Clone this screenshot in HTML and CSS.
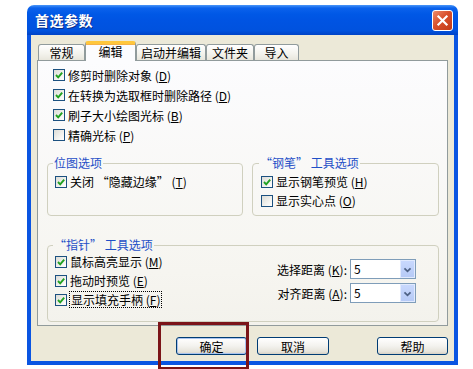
FILE: index.html
```html
<!DOCTYPE html>
<html lang="zh-CN">
<head>
    <meta charset="UTF-8">
    <meta name="viewport" content="width=device-width, initial-scale=1.0">
    <title>首选参数</title>
    <link rel="stylesheet" href="styles.css">
</head>
<body>

    <div class="window">
        <div class="titlebar">
            <span class="title">首选参数</span>
            <span class="close">
                <svg viewBox="0 0 21 21" width="19" height="19"><path d="M6 6 L15 15 M15 6 L6 15" stroke="#fff" stroke-width="2.4" stroke-linecap="square" fill="none"/></svg>
            </span>
        </div>

        <div class="frame">
            <div class="tabs">
                <div class="tab" style="width:47px">常规</div>
                <div class="tab active" style="width:51px">编辑</div>
                <div class="tab" style="width:70px">启动并编辑</div>
                <div class="tab" style="width:48px">文件夹</div>
                <div class="tab" style="width:45px">导入</div>
            </div>

            <div class="panel">
                <div class="checks top-checks">
                    <label class="check"><span class="box on"><svg viewBox="0 0 10 10" width="10" height="10"><path d="M2 5 L4.2 7.3 L8.2 2.6" fill="none" stroke="#21A121" stroke-width="1.9"/></svg></span>修剪时删除对象 (<u>D</u>)</label>
                    <label class="check"><span class="box on"><svg viewBox="0 0 10 10" width="10" height="10"><path d="M2 5 L4.2 7.3 L8.2 2.6" fill="none" stroke="#21A121" stroke-width="1.9"/></svg></span>在转换为选取框时删除路径 (<u>D</u>)</label>
                    <label class="check"><span class="box on"><svg viewBox="0 0 10 10" width="10" height="10"><path d="M2 5 L4.2 7.3 L8.2 2.6" fill="none" stroke="#21A121" stroke-width="1.9"/></svg></span>刷子大小绘图光标 (<u>B</u>)</label>
                    <label class="check"><span class="box"></span>精确光标 (<u>P</u>)</label>
                </div>

                <div class="groups">
                    <fieldset class="group">
                        <legend>位图选项</legend>
                        <label class="check"><span class="box on"><svg viewBox="0 0 10 10" width="10" height="10"><path d="M2 5 L4.2 7.3 L8.2 2.6" fill="none" stroke="#21A121" stroke-width="1.9"/></svg></span>关闭 <span class="q">“</span>隐藏边缘<span class="q">”</span> (<u>T</u>)</label>
                    </fieldset>
                    <fieldset class="group pen">
                        <legend><span class="q">“</span>钢笔<span class="q">”</span> 工具选项</legend>
                        <label class="check"><span class="box on"><svg viewBox="0 0 10 10" width="10" height="10"><path d="M2 5 L4.2 7.3 L8.2 2.6" fill="none" stroke="#21A121" stroke-width="1.9"/></svg></span>显示钢笔预览 (<u>H</u>)</label>
                        <label class="check"><span class="box"></span>显示实心点 (<u>O</u>)</label>
                    </fieldset>
                </div>

                <fieldset class="group pointer">
                    <legend><span class="q">“</span>指针<span class="q">”</span> 工具选项</legend>
                    <div class="pointer-body">
                        <div class="checks">
                            <label class="check"><span class="box on"><svg viewBox="0 0 10 10" width="10" height="10"><path d="M2 5 L4.2 7.3 L8.2 2.6" fill="none" stroke="#21A121" stroke-width="1.9"/></svg></span>鼠标高亮显示 (<u>M</u>)</label>
                            <label class="check"><span class="box on"><svg viewBox="0 0 10 10" width="10" height="10"><path d="M2 5 L4.2 7.3 L8.2 2.6" fill="none" stroke="#21A121" stroke-width="1.9"/></svg></span>拖动时预览 (<u>E</u>)</label>
                            <label class="check"><span class="box on"><svg viewBox="0 0 10 10" width="10" height="10"><path d="M2 5 L4.2 7.3 L8.2 2.6" fill="none" stroke="#21A121" stroke-width="1.9"/></svg></span><span class="focus">显示填充手柄 (<u>F</u>)</span></label>
                        </div>
                        <div class="fields">
                            <div class="field">
                                <span>选择距离 (<u>K</u>):</span>
                                <span class="combo"><span class="value">5</span><span class="drop"><svg viewBox="0 0 15 18" width="15" height="18"><path d="M4 7 L7.5 10.5 L11 7" fill="none" stroke="#4D6185" stroke-width="2"/></svg></span></span>
                            </div>
                            <div class="field">
                                <span>对齐距离 (<u>A</u>):</span>
                                <span class="combo"><span class="value">5</span><span class="drop"><svg viewBox="0 0 15 18" width="15" height="18"><path d="M4 7 L7.5 10.5 L11 7" fill="none" stroke="#4D6185" stroke-width="2"/></svg></span></span>
                            </div>
                        </div>
                    </div>
                </fieldset>
            </div>

            <div class="buttons">
                <button class="btn ok">确定</button>
                <button class="btn cancel">取消</button>
                <button class="btn help">帮助</button>
            </div>
        </div>
    </div>

    <div class="marker"></div>

</body>
</html>
```

FILE: styles.css
```css
* {
    box-sizing: border-box;
}

body {
    margin: 0;
    width: 473px;
    height: 369px;
    overflow: hidden;
    position: relative;
    background: #fff;
    font-family: "Noto Sans CJK SC", sans-serif;
    font-size: 12px;
    color: #000;
}

u {
    text-decoration: underline;
}

.q {
    font-feature-settings: "fwid";
}

.window {
    margin: 5px 0 0 27px;
    width: 431px;
    height: 360px;
    display: flex;
    flex-direction: column;
}

.titlebar {
    height: 30px;
    flex: none;
    border-radius: 7px 7px 0 0;
    background: linear-gradient(#4A96F8 0, #0B62EC 3px, #0058E6 9px, #0054E3 50%, #0052DE 85%, #0043C6 100%);
    display: flex;
    align-items: center;
    justify-content: space-between;
    padding: 0 5px 0 8px;
}

.title {
    color: #fff;
    font-weight: bold;
    font-size: 14px;
    letter-spacing: 0.5px;
    text-shadow: 1px 1px 0 #0A2F8C;
}

.close {
    width: 21px;
    height: 21px;
    border: 1px solid #fff;
    border-radius: 3px;
    background: linear-gradient(135deg, #EE8C6C, #D9502C 45%, #C23A17);
    display: flex;
    align-items: center;
    justify-content: center;
}

.frame {
    flex: 1;
    background: #ECE9D8;
    border: 4px solid #0A55E2;
    border-top: none;
    padding: 6px 6px 0 6px;
}

.tabs {
    height: 19px;
    display: flex;
    align-items: flex-end;
    padding-left: 1px;
}

.tab {
    height: 16px;
    border: 1px solid #919B9C;
    border-bottom: none;
    border-radius: 3px 3px 0 0;
    background: linear-gradient(#FFFFFF, #F3F2EC 60%, #E8E6DC);
    text-align: center;
    line-height: 15px;
}

.tab.active {
    height: 20px;
    margin-bottom: -1px;
    position: relative;
    z-index: 1;
    background: #FCFCFE;
    border-top: 3px solid #FFC73C;
    line-height: 15px;
    box-shadow: inset 0 1px 0 #F5B248;
}

.panel {
    height: 266px;
    border: 1px solid #919B9C;
    background: linear-gradient(#FCFCFE, #F6F5F0 80%, #F3F2EC);
    padding: 4px 8px 0 9px;
}

.checks {
    display: flex;
    flex-direction: column;
}

.top-checks {
    padding-left: 6px;
}

.check {
    height: 19px;
    display: flex;
    align-items: center;
    white-space: pre;
}

.top-checks .check {
    height: 20px;
}

.box {
    width: 12px;
    height: 12px;
    flex: none;
    border: 1px solid #1C5180;
    background: linear-gradient(135deg, #DCDCD6, #F6F6F3 70%, #FFFFFF);
    margin-right: 3px;
    display: flex;
    align-items: center;
    justify-content: center;
}

.groups {
    margin-top: 11px;
    display: grid;
    grid-template-columns: 196px 187px;
    gap: 9px;
}

.group {
    margin: 0;
    min-width: 0;
    height: 60px;
    padding: 2px 7px 0 7px;
    border: 1px solid #D0D0BF;
    border-radius: 4px;
}

.group.pen {
    padding-left: 8px;
}

legend {
    padding: 0 1px;
    margin-left: -2px;
    line-height: 14px;
    color: #1F4FC7;
}

.pointer {
    margin-top: 22px;
    height: 84px;
    padding-top: 0;
}

.pointer-body {
    display: flex;
    justify-content: space-between;
}

.focus {
    outline: 1px dotted #000;
    padding: 0 1px;
    line-height: 15px;
}

.fields {
    padding-top: 7px;
    margin-right: 15px;
    display: flex;
    flex-direction: column;
    gap: 4px;
}

.field {
    height: 20px;
    display: flex;
    align-items: center;
    justify-content: flex-end;
}

.combo {
    margin-left: 3px;
    width: 66px;
    height: 20px;
    border: 1px solid #7F9DB9;
    background: #fff;
    display: flex;
}

.value {
    flex: 1;
    padding-left: 3px;
    line-height: 18px;
}

.drop {
    width: 15px;
    height: 18px;
    border: 1px solid #E1EAFE;
    background: linear-gradient(#C8D8FD, #B6CAF6);
    display: flex;
}

.buttons {
    margin-top: 11px;
    display: flex;
    justify-content: flex-end;
}

.btn {
    height: 18px;
    width: 72px;
    padding: 0;
    font-family: inherit;
    font-size: 12px;
    line-height: 15px;
    color: #000;
    border: 1px solid #003C74;
    border-radius: 3px;
    background: linear-gradient(#FFFFFF, #F3F2EE 50%, #E6E3DA 85%, #D6D0C5);
}

.ok {
    width: 71px;
    margin-right: 10px;
    box-shadow: inset 0 0 0 1px #A9C3EE;
}

.cancel {
    margin-right: 48px;
}

.help {
    width: 71px;
}

.marker {
    position: absolute;
    left: 158px;
    top: 322px;
    width: 91px;
    height: 48px;
    border: 3px solid #7B1418;
}
```
